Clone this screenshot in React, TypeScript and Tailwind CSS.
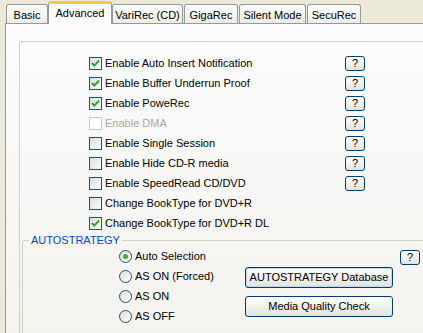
import clsx from "clsx";

const tabs = [
  { label: "Basic", w: "w-[42px]", ml: "" },
  { label: "Advanced", w: "w-[64px]", ml: "", active: true },
  { label: "VariRec (CD)", w: "w-[71px]", ml: "" },
  { label: "GigaRec", w: "w-[54px]", ml: "ml-[1px]" },
  { label: "Silent Mode", w: "w-[67px]", ml: "ml-[1px]" },
  { label: "SecuRec", w: "w-[54px]", ml: "ml-[1px]" },
];

const options = [
  { label: "Enable Auto Insert Notification", checked: true, help: true },
  { label: "Enable Buffer Underrun Proof", checked: true, help: true },
  { label: "Enable PoweRec", checked: true, help: true },
  { label: "Enable DMA", disabled: true, help: true },
  { label: "Enable Single Session", help: true },
  { label: "Enable Hide CD-R media", help: true },
  { label: "Enable SpeedRead CD/DVD", help: true },
  { label: "Change BookType for DVD+R" },
  { label: "Change BookType for DVD+R DL", checked: true },
];

const strategies = ["Auto Selection", "AS ON (Forced)", "AS ON", "AS OFF"];

function Check({ checked, disabled }: { checked?: boolean; disabled?: boolean }) {
  return (
    <span
      className={clsx(
        "w-[13px] h-[13px] border flex items-center justify-center shrink-0",
        disabled
          ? "border-[#CAC8BB] bg-white"
          : "border-[#1C5180] bg-gradient-to-br from-[#DCDCD7] to-white"
      )}
    >
      {checked && (
        <svg width="11" height="11" viewBox="0 0 11 11">
          <path d="M2 5 L4.3 7.6 L9 2.6" stroke="#21A121" strokeWidth="2" fill="none" />
        </svg>
      )}
    </span>
  );
}

function Radio({ selected }: { selected?: boolean }) {
  return (
    <span className="w-[13px] h-[13px] rounded-full border border-[#1C5180] bg-gradient-to-br from-[#DCDCD7] to-white flex items-center justify-center shrink-0">
      {selected && <span className="w-[5px] h-[5px] rounded-full bg-[#2BB52B]" />}
    </span>
  );
}

function Help() {
  return (
    <button className="w-[20px] h-[15px] border border-[#003C74] rounded-[3px] bg-gradient-to-b from-white to-[#E3E3DB] flex items-center justify-center leading-none text-[11px]">
      ?
    </button>
  );
}

export default function App() {
  return (
    <div className="w-[423px] h-[333px] overflow-hidden bg-[#ECE9D8] font-['Liberation_Sans',Arial,sans-serif] text-[11px] text-black">
      {/* tab strip */}
      <div className="relative z-10 flex items-end h-[23px] pl-[6px]">
        {tabs.map((t) =>
          t.active ? (
            <div
              key={t.label}
              className={clsx(
                t.w,
                "h-[23px] -mb-px bg-[#FCFCFE] border-x border-[#919B9C] border-t-[3px] border-t-[#FFC83C] rounded-t-[3px] flex items-center justify-center pb-[1px]"
              )}
            >
              {t.label}
            </div>
          ) : (
            <div
              key={t.label}
              className={clsx(
                t.w,
                t.ml,
                "h-[19px] border-x border-t border-[#919B9C] rounded-t-[3px] bg-gradient-to-b from-white to-[#ECEBE6] flex items-center justify-center pt-[2px]"
              )}
            >
              {t.label}
            </div>
          )
        )}
      </div>

      {/* tab panel */}
      <div className="ml-[5px] w-[440px] h-[310px] border-l border-t border-[#919B9C] bg-gradient-to-b from-[#FCFCFE] to-[#F4F3EE] pl-[13px] pt-[17px]">
        <div className="h-[293px] border-l border-t border-[#D0D0BF] rounded-tl-[3px] flex flex-col">
          <div className="pt-[11px] pl-[69px]">
            {options.map((o) => (
              <div key={o.label} className="h-[20px] flex items-center">
                <div className="w-[256px] flex items-center">
                  <Check checked={o.checked} disabled={o.disabled} />
                  <span className={clsx("ml-[3px]", o.disabled && "text-[#ACA899]")}>{o.label}</span>
                </div>
                {o.help && <Help />}
              </div>
            ))}
          </div>

          <fieldset className="ml-[2px] mt-[1px] flex-1 border-l border-t border-[#D0D0BF] rounded-tl-[3px]">
            <legend className="ml-[6px] px-[2px] leading-[13px] text-[#0046D5]">AUTOSTRATEGY</legend>
            <div className="-mt-px flex">
              <div className="pl-[96px] w-[222px]">
                {strategies.map((s, i) => (
                  <div key={s} className="h-[20px] flex items-center">
                    <Radio selected={i === 0} />
                    <span className="ml-[3px] whitespace-nowrap">{s}</span>
                  </div>
                ))}
              </div>
              <div className="flex flex-col pt-[21px]">
                <button className="w-[148px] h-[21px] border border-[#003C74] rounded-[3px] bg-gradient-to-b from-white to-[#E3E3DB] shadow-[inset_0_0_0_1px_#BCD4F6] text-[11px]">
                  AUTOSTRATEGY Database
                </button>
                <button className="mt-[8px] w-[148px] h-[21px] border border-[#003C74] rounded-[3px] bg-gradient-to-b from-white to-[#E3E3DB] text-[11px]">
                  Media Quality Check
                </button>
              </div>
              <div className="ml-[7px] pt-[4px]">
                <Help />
              </div>
            </div>
          </fieldset>
        </div>
      </div>
    </div>
  );
}
